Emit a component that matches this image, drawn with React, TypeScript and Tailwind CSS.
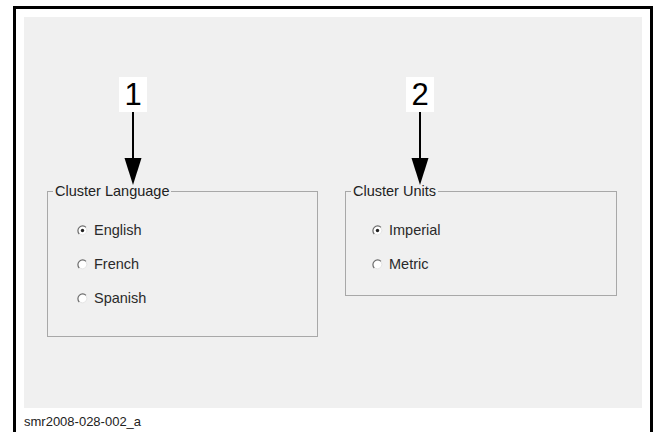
import React from 'react';

const font = { fontFamily: '"Liberation Sans", Arial, sans-serif' };

// classic windows-style radio glyph, faded like the screenshot
const Radio: React.FC<{ checked?: boolean }> = ({ checked }) => (
  <svg width="11" height="11" viewBox="0 0 11 11" className="shrink-0">
    <circle cx="5.5" cy="5.5" r="4.5" fill="#fff" />
    <path d="M9 2.3 A4.5 4.5 0 1 0 2.3 9" fill="none" stroke="#6a6a6a" strokeWidth="1.2" />
    <path d="M9.2 3 A4.5 4.5 0 0 1 3 9.2" fill="none" stroke="#e4e4e4" strokeWidth="1" />
    {checked && <circle cx="5.5" cy="5.5" r="1.7" fill="#222" />}
  </svg>
);

const Group: React.FC<{ title: string; options: string[]; className: string; indent: string }> = ({ title, options, className, indent }) => (
  <div className={`relative border border-[#a8a8a8] ${className}`}>
    <span className="absolute left-[5px] top-[-9px] bg-[#f0f0f0] px-[2px] text-[14.5px] leading-[17px] text-[#222]">{title}</span>
    <div className={`flex flex-col gap-[17px] pt-[30px] ${indent}`}>
      {options.map((o, i) => (
        <div key={o} className="flex items-center gap-[6px] h-[17px] text-[14.5px] text-[#2a2a2a]">
          <Radio checked={i === 0} />
          <span>{o}</span>
        </div>
      ))}
    </div>
  </div>
);

const Callout: React.FC<{ n: string; className: string }> = ({ n, className }) => (
  <div className={`absolute flex flex-col items-center ${className}`}>
    <div className="w-[28px] h-[35px] bg-white flex items-center justify-center text-[31px] leading-none text-black">{n}</div>
    <svg width="20" height="73" viewBox="0 0 20 73" className="block">
      <line x1="10" y1="0" x2="10" y2="50" stroke="#000" strokeWidth="2" />
      <polygon points="1.5,46 18.5,46 10,73" fill="#000" />
    </svg>
  </div>
);

export default function App() {
  return (
    <div className="w-[655px] h-[432px] bg-white overflow-hidden pl-[13px] pt-[6px]" style={font}>
      <div className="w-[640px] h-[440px] border-[3px] border-b-0 border-black px-[8px] pt-[8px]">
        <div className="relative h-[391px] bg-[#f0f0f0] flex items-start pl-[23px] pt-[174px] gap-[27px]">
          <Group title="Cluster Language" options={['English', 'French', 'Spanish']} className="w-[271px] h-[146px]" indent="pl-[29px]" />
          <Group title="Cluster Units" options={['Imperial', 'Metric']} className="w-[272px] h-[105px]" indent="pl-[26px]" />
          <Callout n="1" className="left-[95px] top-[60px]" />
          <Callout n="2" className="left-[382px] top-[60px]" />
        </div>
        <div className="pt-[6px] text-[13px] leading-[16px] text-[#222]">smr2008-028-002_a</div>
      </div>
    </div>
  );
}
